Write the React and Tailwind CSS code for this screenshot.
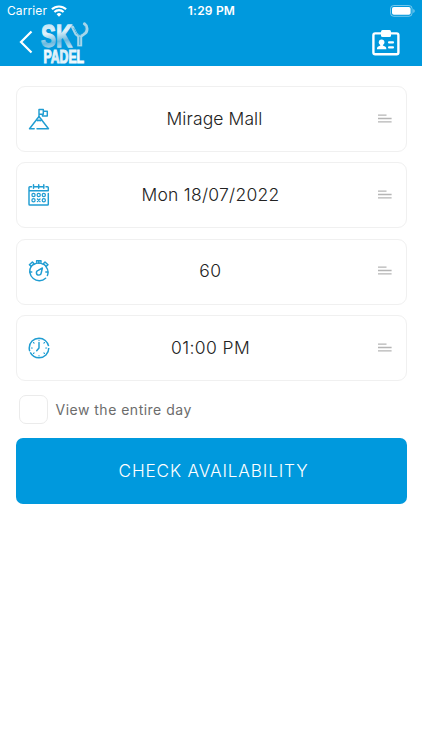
import React from 'react';

function Wifi() {
  return (
    <svg width="16" height="12" viewBox="0 0 16 12" fill="none" stroke="#fff" strokeWidth="2.1">
      <path d="M.9 4.3a10.3 10.3 0 0 1 14.2 0" />
      <path d="M3.4 7a6.7 6.7 0 0 1 9.2 0" />
      <path d="M8 11.8 5.6 9.2a3.5 3.5 0 0 1 4.8 0z" fill="#fff" stroke="none" />
    </svg>
  );
}

function Battery() {
  return (
    <svg width="26" height="12" viewBox="0 0 26 12">
      <rect x=".5" y=".5" width="21.6" height="10.8" rx="3.2" fill="none" stroke="#fff" strokeOpacity=".45" />
      <rect x="2" y="2" width="18.6" height="7.8" rx="1.8" fill="#fff" />
      <path d="M23.4 4v4c1.6-.6 1.6-3.4 0-4z" fill="#fff" fillOpacity=".55" />
    </svg>
  );
}

function Logo() {
  return (
    <svg width="50" height="42" viewBox="0 0 50 42" className="overflow-visible">
      <defs>
        <linearGradient id="sky" x1="0" y1="0" x2=".15" y2="1">
          <stop offset="0" stopColor="#a9dcf3" />
          <stop offset=".45" stopColor="#e3f3fa" />
          <stop offset=".72" stopColor="#6bb9de" />
          <stop offset="1" stopColor="#d5edf7" />
        </linearGradient>
        <linearGradient id="padel" x1="0" y1="0" x2="1" y2=".5">
          <stop offset="0" stopColor="#fff" />
          <stop offset=".5" stopColor="#d8eef8" />
          <stop offset="1" stopColor="#f8fdff" />
        </linearGradient>
      </defs>
      <text x="0" y="24.6" textLength="31" lengthAdjust="spacingAndGlyphs" className="font-['Liberation_Sans',sans-serif] text-[31px] font-bold" fill="url(#sky)" stroke="url(#sky)" strokeWidth="1.3">SK</text>
      <g fill="none" stroke="#a5d6eb" strokeLinecap="round">
        <path d="M31.5 5 35 12l3.8 3.2L44 11.4c2.9-2.4 2.6-7.4-.6-9.6" strokeWidth="3" />
        <path d="M38.7 15v9.4" strokeWidth="5" strokeLinecap="butt" />
        <path d="M33 6.5 36 12l2.7 1.6 4-3c1.5-1.8 2-5 .8-7" stroke="#2f9fd2" strokeWidth=".8" strokeDasharray="1 1.5" />
        <path d="M38.7 15v7.4" stroke="#4bb0da" strokeWidth="1.2" />
      </g>
      <text x="2.5" y="41" textLength="40.5" lengthAdjust="spacingAndGlyphs" className="font-['Liberation_Sans',sans-serif] text-[17.5px] font-bold" fill="url(#padel)" stroke="url(#padel)" strokeWidth="1">PADEL</text>
    </svg>
  );
}

function Badge() {
  return (
    <svg width="28" height="26" viewBox="0 0 28 26" fill="#fff">
      <rect x="1.4" y="3.4" width="25" height="20.8" rx="1.8" fill="none" stroke="#fff" strokeWidth="2.4" />
      <rect x="9" y="0" width="10" height="7" rx="1.5" />
      <circle cx="9.6" cy="12.2" r="2.8" />
      <path d="M8.3 14h2.6v1.4l2.6 1.3c.7.4.8 1.2.8 2.5H5c0-1.3.1-2.1.8-2.5l2.5-1.3z" />
      <rect x="16" y="11.2" width="6" height="2.4" rx="1" />
      <rect x="16" y="16.2" width="6" height="2.4" rx="1" />
    </svg>
  );
}

const stroke = { fill: 'none', stroke: '#209dd2', strokeWidth: 1.45, strokeLinecap: 'round', strokeLinejoin: 'round' };

function PeakIcon() {
  return (
    <svg width="22" height="22" viewBox="0 0 22 22" {...stroke}>
      <path d="M6.2 20.7H1.5L11 8.5l9.5 12.2H9" />
      <path d="M8.6 11.5c.7 1.7 1.8 1.2 2.4.5.7.8 1.9 1.2 2.5-.5" />
      <path d="M11 8.5v-7h4.3v4.7H11M15.3 3.3h4v4.6h-4.8V6.4" />
    </svg>
  );
}

function CalendarIcon() {
  return (
    <svg width="22" height="22" viewBox="0 0 22 22" {...stroke}>
      <path d="M3.5 2.7H1.8a.8.8 0 0 0-.8.8v16.7c0 .5.3.8.8.8h17.7c.5 0 .8-.3.8-.8V9.4M6 2.7h9.5M18 2.7h1.5c.5 0 .8.3.8.8v3.2H1" />
      <path d="M5.5.8v3.4M10.7.8v3.4M15.8.8v3.4" />
      <g strokeWidth="1.25">
        <circle cx="5.5" cy="11" r="1.6" />
        <circle cx="10.7" cy="11" r="1.6" />
        <circle cx="15.8" cy="11" r="1.6" />
        <circle cx="5.5" cy="16.3" r="1.6" />
        <path d="m9.4 15 2.6 2.6m0-2.6-2.6 2.6" />
        <circle cx="15.8" cy="16.3" r="1.6" />
      </g>
    </svg>
  );
}

function StopwatchIcon() {
  return (
    <svg width="22" height="22" viewBox="0 0 22 22" {...stroke}>
      <path d="M17.6 18.2A9.4 9.4 0 0 1 3.2 6.4M5.6 4.6A9.4 9.4 0 0 1 15.4 4.4M18 6.6a9.4 9.4 0 0 1 1.4 9" />
      <path d="M10.8 3.2V.9M8.6 2.2V.8h4.4v1.4" />
      <path d="M3.2 6.4 1.4 4.8l3-2.9 1.7 1.8zM18.2 6.4 20 4.8l-3-2.9-1.7 1.8z" />
      <path d="M1.8 12h2M17.8 12h2" />
      <path d="M14.4 8 13.2 13a2.4 2.4 0 1 1-3-2.6z" />
    </svg>
  );
}

function ClockIcon() {
  return (
    <svg width="22" height="22" viewBox="0 0 22 22" {...stroke}>
      <circle cx="11" cy="11" r="9.8" strokeDasharray="26 1.3 32 2.28" strokeLinecap="butt" />
      <path d="M11 5.5V11l-2.3 2.8" />
      <path strokeWidth="1.1" d="M11 3v.5M11 18.5v.5M3.3 11h1M17.7 11h1M5.5 5.5l.6.6M16.5 5.5l-.6.6M5.5 16.5l.6-.6M16.5 16.5l-.6-.6" />
    </svg>
  );
}

function Lines() {
  return (
    <svg width="14" height="9" viewBox="0 0 14 9" stroke="#b5b5b5" strokeWidth="1.3">
      <path d="M0 1.2h8.5M0 4.5h13.6M0 7.8h13.6" />
    </svg>
  );
}

const rows = [
  { Icon: PeakIcon, label: 'Mirage Mall', style: 'pl-[10px] tracking-[0.1px]' },
  { Icon: CalendarIcon, label: 'Mon 18/07/2022', style: 'pl-[2px] tracking-[0.26px]' },
  { Icon: StopwatchIcon, label: '60', style: 'pl-[2px] tracking-[0.6px]' },
  { Icon: ClockIcon, label: '01:00 PM', style: 'pl-[2px] tracking-[0.4px]' },
];

export default function App() {
  return (
    <div className="h-[750px] w-[422px] overflow-hidden bg-white font-['Inter',sans-serif]">
      <header className="h-[66px] bg-[#0099dd] text-white">
        <div className="grid h-[22px] grid-cols-3 items-center pl-[7px] pr-[6px]">
          <div className="flex items-center gap-[4px] text-[12px] tracking-[0.1px]">
            <span>Carrier</span>
            <Wifi />
          </div>
          <div className="text-center text-[12px] font-semibold tracking-[0.2px]">1:29 PM</div>
          <div className="flex justify-end"><Battery /></div>
        </div>
        <div className="flex h-[42px] items-center pl-[19px] pr-[22px]">
          <svg width="14" height="24" viewBox="0 0 14 24" fill="none" stroke="#fff" strokeWidth="2.2" className="mb-[3px]">
            <path d="M12.5 1.5 2 12l10.5 10.5" />
          </svg>
          <div className="ml-2"><Logo /></div>
          <div className="ml-auto"><Badge /></div>
        </div>
      </header>
      <main className="px-[15.5px] pt-5">
        <div className="flex flex-col gap-[10.4px]">
          {rows.map(({ Icon, label, style }) => (
            <div key={label} className="grid h-[66px] grid-cols-[30px_1fr_30px] items-center rounded-[9px] border-[1.5px] border-[#f0f0f0] pb-px pl-[11px] pr-[14px]">
              <Icon />
              <span className={`text-center text-[17.5px] font-[350] leading-6 text-[#222] ${style}`}>{label}</span>
              <div className="flex justify-end pb-px"><Lines /></div>
            </div>
          ))}
        </div>
        <div className="mt-[14px] flex items-center pl-[3px]">
          <div className="size-[29px] rounded-[7px] border-[1.5px] border-[#ebebeb]" />
          <span className="ml-2 pb-px text-[14px] tracking-[0.49px] text-[#6c6c6c]">View the entire day</span>
        </div>
        <button className="mt-[14px] flex h-[66px] w-full items-center justify-center rounded-[7px] bg-[#0099dd] pb-px pl-[5px] text-[17.2px] font-light tracking-[0.85px] text-white">
          CHECK AVAILABILITY
        </button>
      </main>
    </div>
  );
}
